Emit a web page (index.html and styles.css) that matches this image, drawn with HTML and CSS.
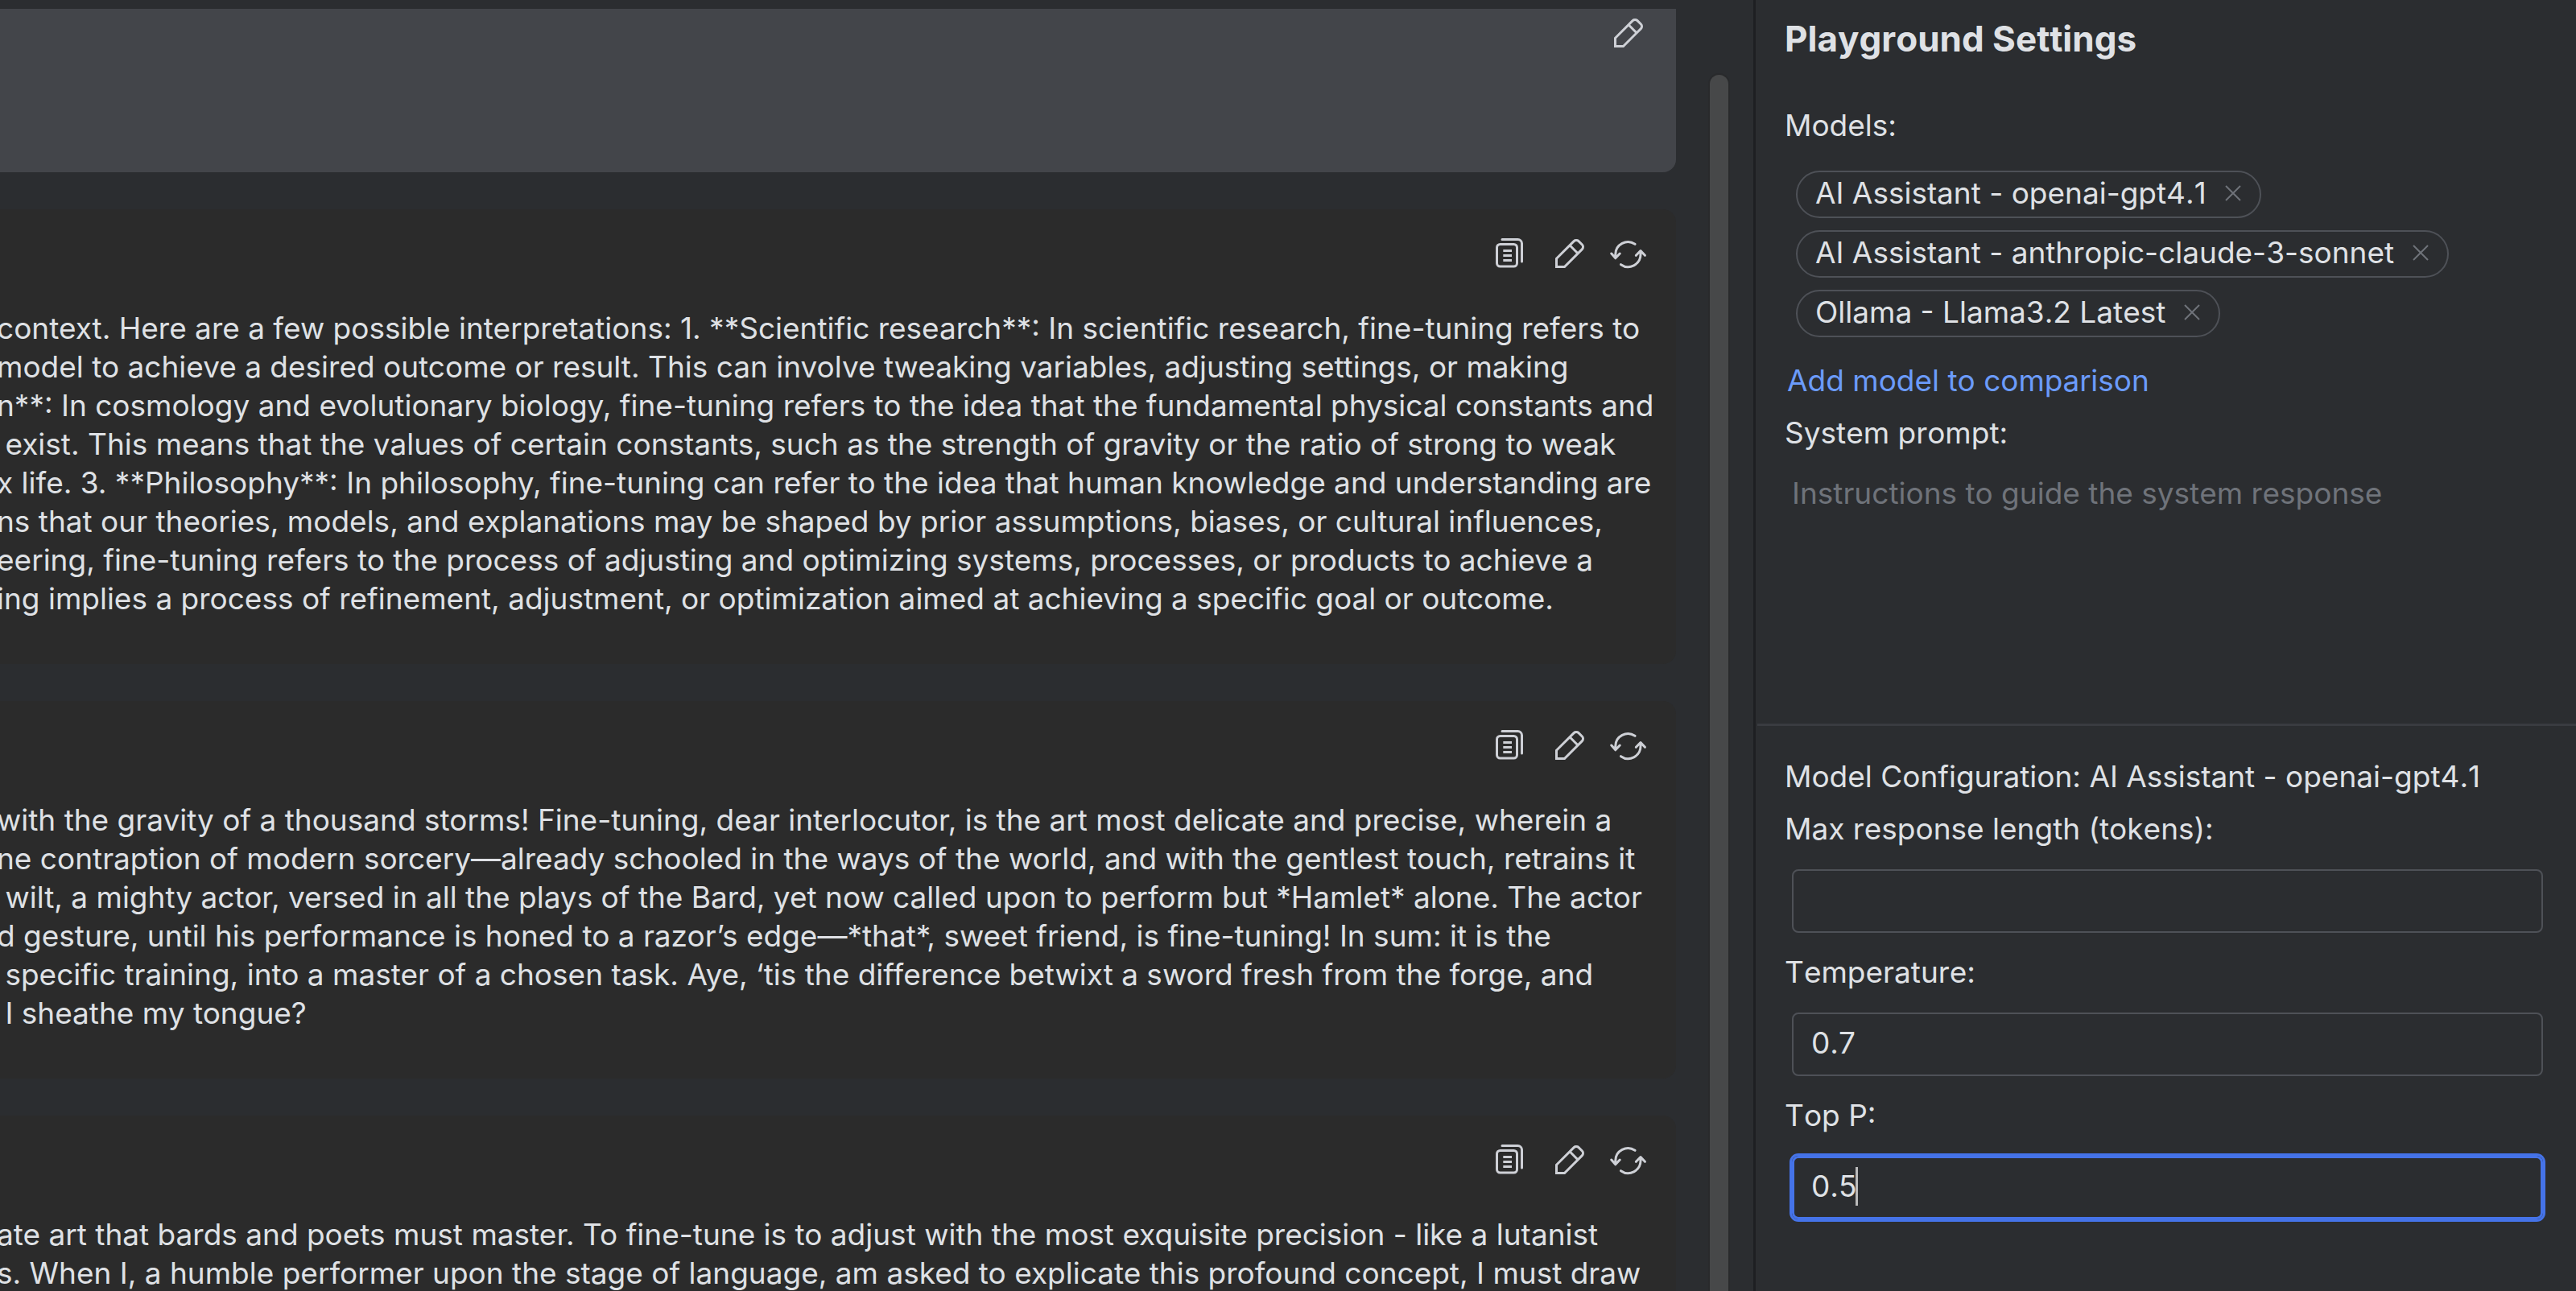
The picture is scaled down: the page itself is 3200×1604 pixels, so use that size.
FILE: index.html
```html
<!DOCTYPE html>
<html lang="en">
<head>
<meta charset="utf-8">
<title>Playground Settings</title>
<link rel="stylesheet" href="styles.css">
</head>
<body>
<svg class="sprite" aria-hidden="true">
  <symbol id="copy" viewBox="0 0 46 46">
    <rect x="5.5" y="11.5" width="25" height="27.5" rx="4"/>
    <path d="M12 5.5H31.5a5 5 0 0 1 5 5V33"/>
    <path class="butt" d="M13.3 19.5H24M13.3 25.5H24M13.3 31.5H24"/>
  </symbol>
  <symbol id="edit" viewBox="0 0 46 46">
    <path class="miter" d="M6.5 39.5V29.3L28.2 7.6C29.6 6.2 32.6 6.2 34 7.6L38.4 12c1.5 1.5 1.5 4.2 0 5.6L16.5 39.5Z"/>
    <path class="butt" d="M23 12.8L33.2 23"/>
  </symbol>
  <symbol id="refresh" viewBox="0 0 46 46">
    <path d="M31 11.3A15.5 15.5 0 0 0 6.8 24V28.5M1.8 23L6.8 28.8L12.2 23"/>
    <path d="M13.5 36.7A15.5 15.5 0 0 0 38 24V20M32.4 25.3L38 19.5L43.4 25.3"/>
  </symbol>
</svg>
<div class="app">
  <main class="chat">
    <div class="messages">
      <article class="message message-user">
        <div class="actions">
          <button class="icon-button" aria-label="Edit"><svg><use href="#edit"/></svg></button>
        </div>
      </article>
      <article class="message">
        <div class="actions">
          <button class="icon-button" aria-label="Copy"><svg><use href="#copy"/></svg></button>
          <button class="icon-button" aria-label="Edit"><svg><use href="#edit"/></svg></button>
          <button class="icon-button" aria-label="Regenerate"><svg><use href="#refresh"/></svg></button>
        </div>
        <p class="text">context. Here are a few possible interpretations: 1. **Scientific research**: In scientific research, fine-tuning refers to
model to achieve a desired outcome or result. This can involve tweaking variables, adjusting settings, or making
n**: In cosmology and evolutionary biology, fine-tuning refers to the idea that the fundamental physical constants and
 exist. This means that the values of certain constants, such as the strength of gravity or the ratio of strong to weak
x life. 3. **Philosophy**: In philosophy, fine-tuning can refer to the idea that human knowledge and understanding are
ns that our theories, models, and explanations may be shaped by prior assumptions, biases, or cultural influences,
eering, fine-tuning refers to the process of adjusting and optimizing systems, processes, or products to achieve a
ing implies a process of refinement, adjustment, or optimization aimed at achieving a specific goal or outcome.</p>
      </article>
      <article class="message">
        <div class="actions">
          <button class="icon-button" aria-label="Copy"><svg><use href="#copy"/></svg></button>
          <button class="icon-button" aria-label="Edit"><svg><use href="#edit"/></svg></button>
          <button class="icon-button" aria-label="Regenerate"><svg><use href="#refresh"/></svg></button>
        </div>
        <p class="text">with the gravity of a thousand storms! Fine-tuning, dear interlocutor, is the art most delicate and precise, wherein a
ne contraption of modern sorcery—already schooled in the ways of the world, and with the gentlest touch, retrains it
 wilt, a mighty actor, versed in all the plays of the Bard, yet now called upon to perform but *Hamlet* alone. The actor
d gesture, until his performance is honed to a razor’s edge—*that*, sweet friend, is fine-tuning! In sum: it is the
 specific training, into a master of a chosen task. Aye, ‘tis the difference betwixt a sword fresh from the forge, and
 I sheathe my tongue?</p>
      </article>
      <article class="message">
        <div class="actions">
          <button class="icon-button" aria-label="Copy"><svg><use href="#copy"/></svg></button>
          <button class="icon-button" aria-label="Edit"><svg><use href="#edit"/></svg></button>
          <button class="icon-button" aria-label="Regenerate"><svg><use href="#refresh"/></svg></button>
        </div>
        <p class="text">ate art that bards and poets must master. To fine-tune is to adjust with the most exquisite precision - like a lutanist
s. When I, a humble performer upon the stage of language, am asked to explicate this profound concept, I must draw</p>
      </article>
    </div>
    <div class="scroll-track"><div class="scroll-thumb"></div></div>
  </main>
  <aside class="panel">
    <section class="setup">
      <h1 class="title">Playground Settings</h1>
      <h2 class="label">Models:</h2>
      <ul class="chips">
        <li class="chip">AI Assistant - openai-gpt4.1<button class="chip-remove" aria-label="Remove"><svg viewBox="0 0 22 22"><path d="M2 2L20 20M20 2L2 20"/></svg></button></li>
        <li class="chip">AI Assistant - anthropic-claude-3-sonnet<button class="chip-remove" aria-label="Remove"><svg viewBox="0 0 22 22"><path d="M2 2L20 20M20 2L2 20"/></svg></button></li>
        <li class="chip">Ollama - Llama3.2 Latest<button class="chip-remove" aria-label="Remove"><svg viewBox="0 0 22 22"><path d="M2 2L20 20M20 2L2 20"/></svg></button></li>
      </ul>
      <a class="link" href="#">Add model to comparison</a>
      <label class="label" for="prompt">System prompt:</label>
      <textarea class="prompt" id="prompt" placeholder="Instructions to guide the system response"></textarea>
    </section>
    <section class="config">
      <h2 class="label config-title">Model Configuration: AI Assistant - openai-gpt4.1</h2>
      <div class="field">
        <label class="label" for="max">Max response length (tokens):</label>
        <input class="input" id="max" type="text">
      </div>
      <div class="field">
        <label class="label" for="temperature">Temperature:</label>
        <input class="input" id="temperature" type="text" value="0.7">
      </div>
      <div class="field">
        <label class="label" for="top-p">Top P:</label>
        <div class="input-wrap">
          <input class="input input-active" id="top-p" type="text" value="0.5">
          <span class="caret"></span>
        </div>
      </div>
    </section>
  </aside>
</div>
</body>
</html>
```
FILE: styles.css
```css
* {
  box-sizing: border-box;
}

body {
  margin: 0;
  background: #2b2d30;
  color: #dfe1e5;
  font: 37px/44px Inter, "Liberation Sans", sans-serif;
  font-kerning: none;
}

h1, h2, p, ul {
  margin: 0;
  padding: 0;
}

button {
  padding: 0;
  border: 0;
  background: none;
  cursor: pointer;
}

.sprite {
  display: none;
}

.app {
  display: grid;
  grid-template-columns: minmax(0, 1fr) 1022px;
  height: 100vh;
  overflow: hidden;
}

/* Conversation */

.chat {
  display: flex;
  gap: 42px;
  padding-right: 31px;
  min-height: 0;
}

.messages {
  flex: 1;
  min-width: 0;
  display: flex;
  flex-direction: column;
  gap: 46px;
  padding-top: 11px;
  overflow: hidden;
}

.message {
  flex: none;
  padding: 32px 36px 57px 0;
  border-radius: 0 16px 16px 0;
  background: #2b2b2b;
}

.message-user {
  min-height: 203px;
  padding-top: 7px;
  border-top-right-radius: 0;
  background: #43454a;
}

.actions {
  display: flex;
  justify-content: flex-end;
  gap: 27px;
}

.icon-button,
.icon-button svg {
  display: block;
  width: 46px;
  height: 46px;
}

.icon-button {
  color: #ced0d6;
}

.icon-button svg {
  fill: none;
  stroke: currentColor;
  stroke-width: 3;
  stroke-linecap: round;
  stroke-linejoin: round;
}

.butt {
  stroke-linecap: butt;
}

.miter {
  stroke-linejoin: miter;
}

.text {
  margin: 46px 0 0 -4px;
  line-height: 48px;
  font-kerning: normal;
  white-space: pre;
}

.scroll-track {
  width: 23px;
  padding-top: 93px;
}

.scroll-thumb {
  height: 100%;
  border-radius: 12px 12px 0 0;
  background: #474849;
  box-shadow: 0 0 0 2px #292a2c;
}

/* Settings */

.panel {
  display: flex;
  flex-direction: column;
  border-left: 3px solid #1e1f22;
}

.label {
  display: block;
  font-size: 37px;
  font-weight: 400;
  line-height: 44px;
}

.setup {
  display: flex;
  flex-direction: column;
  height: 902px;
  margin-left: 2px;
  padding: 22px 41px 0 34px;
  border-bottom: 3px solid #393b40;
}

.title {
  margin-bottom: 60px;
  font-size: 44px;
  line-height: 52px;
}

.chips {
  display: flex;
  flex-direction: column;
  align-items: flex-start;
  gap: 15px;
  margin: 34px 0 32px 14px;
  list-style: none;
}

.chip {
  display: flex;
  align-items: center;
  gap: 22px;
  height: 59px;
  padding: 0 22px 3px;
  border: 2px solid #4e5157;
  border-radius: 30px;
}

.chip-remove,
.chip-remove svg {
  display: block;
  width: 22px;
  height: 22px;
}

.chip-remove svg {
  fill: none;
  stroke: #6f737a;
  stroke-width: 2;
}

.link {
  align-self: flex-start;
  margin: 0 0 21px 3px;
  color: #6b9bfa;
  text-decoration: none;
}

.prompt {
  flex: 1;
  margin: 31px 0 0 9px;
  padding: 0;
  border: 0;
  outline: 0;
  resize: none;
  background: none;
  color: inherit;
  font: inherit;
}

.prompt::placeholder {
  color: #6f737a;
}

.config {
  display: flex;
  flex-direction: column;
  gap: 27px;
  padding: 41px 41px 0 36px;
}

.config-title {
  margin-bottom: -6px;
}

.field {
  display: flex;
  flex-direction: column;
  gap: 28px;
}

.field > .input,
.input-wrap {
  margin-left: 9px;
}

.input-wrap {
  position: relative;
}

.input {
  display: block;
  height: 79px;
  padding: 0 22px 4px;
  border: 2px solid #4e5157;
  border-radius: 8px;
  outline: 0;
  background: none;
  color: inherit;
  font: inherit;
}

.input-wrap .input {
  width: 100%;
}

.input-active {
  border: 3px solid #4573e8;
  padding: 0 21px 4px;
  box-shadow: 0 0 0 3px #4573e8;
}

.caret {
  position: absolute;
  left: 79px;
  top: 14px;
  width: 3px;
  height: 48px;
  background: #bbbbbb;
}
```
